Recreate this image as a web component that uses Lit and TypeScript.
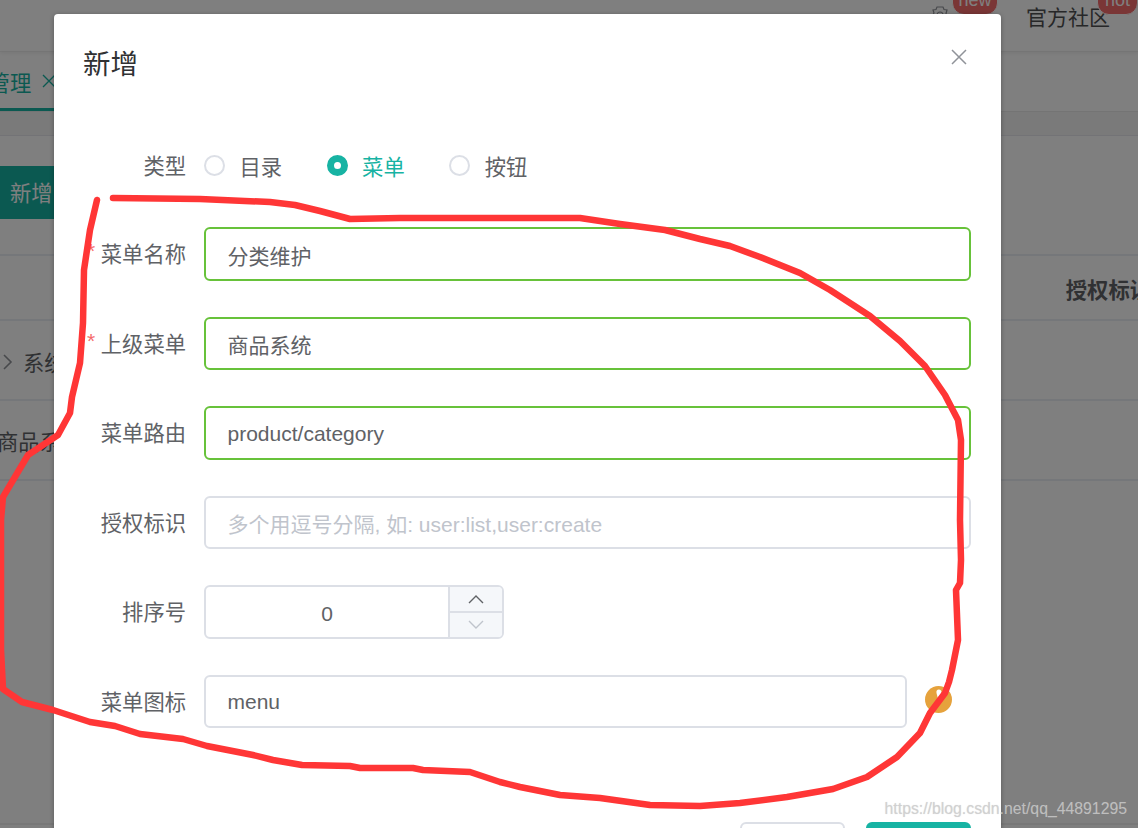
import { LitElement, html, css } from "lit";
import { customElement } from "lit/decorators.js";

const STROKE = "M113 198 L200 199 L270 202 L295 205 L320 211 L350 219 L400 218 L580 218 L620 224 L665 230 L700 239 L730 246 L760 257 L800 273 L830 290 L870 316 L900 341 L925 366 L945 395 L958 420 L961 440 L960 520 L961 560 L960 583 L956 590 L958 640 L952 670 L949 682 L945 693 L930 713 L920 733 L897 757 L867 777 L833 789 L787 797 L740 803 L700 806 L650 805 L600 798 L560 795 L520 787 L500 782 L470 772 L423 770 L413 768 L360 768 L350 766 L302 765 L273 760 L253 755 L207 746 L183 739 L140 734 L115 726 L90 722 L53 710 L22 702 L3 689 L1 650 L1 520 L3 497 L28 455 L58 435 L70 413 L72 397 L80 363 L83 323 L84 270 L90 230 L97 200";

@customElement("app-root")
export class AppRoot extends LitElement {
  static styles = css`
    :host {
      display: block;
      position: relative;
      width: 1138px;
      height: 828px;
      overflow: hidden;
      background: #fff;
      font-family: "Liberation Sans", "Noto Sans CJK SC", sans-serif;
      font-size: 21.3px;
      color: #606266;
    }
    .page { display: flex; flex-direction: column; height: 828px; }
    .top {
      height: 52px; flex: none; display: flex; justify-content: flex-end; align-items: center;
      border-bottom: 1px solid #f0f0f0; box-sizing: border-box; box-shadow: 0 1px 4px rgba(0,0,0,.08);
    }
    .gear { width: 20px; height: 20px; margin-right: 76px; margin-top: -22px; color: #909399; }
    .community { margin-right: 28px; margin-top: -16px; white-space: nowrap; line-height: 52px; font-size: 21px; color: #303133; opacity: .85; }
    .badge {
      position: absolute; top: -14px; box-sizing: border-box; background: #f56c6c; color: #fff; font-size: 18px; line-height: 26px;
      height: 29px; border: 1px solid #fff; border-radius: 12px; text-align: center;
    }
    .b-new { left: 952px; width: 46px; }
    .b-hot { left: 1097px; width: 41px; }
    .tabs { height: 60px; flex: none; display: flex; box-sizing: border-box; border-bottom: 1px solid #e8e8e8; box-shadow: 0 1px 4px rgba(0,0,0,.1); }
    .tab {
      margin-left: -54px; padding-right: 30px; display: flex; gap: 11px; align-items: center;
      height: 59px; box-sizing: border-box; border-bottom: 3px solid #17b3a3; color: #17b3a3; white-space: nowrap; padding-top: 2px;
    }
    .tab svg { width: 14px; height: 14px; }
    .gutter { height: 24px; flex: none; background: #f4f5f5; border-bottom: 1px solid #e6e6ec; box-sizing: border-box; }
    .content { flex: 1; display: flex; flex-direction: column; min-height: 0; }
    .bar { height: 120px; flex: none; box-sizing: border-box; padding-top: 30px; border-bottom: 2px solid #ebeef5; }
    .add {
      width: 100px; height: 53px; background: #17b3a3; color: #fff; display: flex; align-items: center;
      padding: 0 0 2px 10px; box-sizing: border-box; border-radius: 0 4px 4px 0;
    }
    .row { flex: none; display: flex; align-items: center; box-sizing: border-box; border-bottom: 2px solid #ebeef5; white-space: nowrap; }
    .r-head { height: 65px; justify-content: flex-end; font-weight: 700; color: #606266; padding-top: 2px; }
    .r-head span { margin-right: -13px; }
    .r-sys { height: 80px; gap: 9px; padding-top: 3px; }
    .r-sub { height: 80px; text-indent: -3px; }
    .chev { width: 14px; height: 18px; color: #909399; flex: none; }
    .rest { flex: 1; border-bottom: 2px solid #f0f0f0; margin-bottom: 3px; }

    .mask { position: absolute; inset: 0; background: rgba(0, 0, 0, .5); }
    .dialog {
      position: absolute; left: 54px; top: 14px; width: 947px; height: 900px; box-sizing: border-box;
      background: #fff; border-radius: 4px; box-shadow: 0 1px 5px rgba(0,0,0,.3);
      padding: 0 30px 0 29px; display: flex; flex-direction: column;
    }
    .head { height: 100px; flex: none; display: flex; justify-content: space-between; align-items: flex-start; }
    .title { font-size: 27.5px; line-height: 36px; margin-top: 33px; color: #303133; }
    .close { width: 16px; height: 16px; margin-top: 35px; margin-right: 4px; color: #909399; }
    .form { display: flex; flex-direction: column; }
    .field { display: flex; align-items: center; height: 53.5px; margin-bottom: 36px; flex: none; }
    .radio-field { height: 38px; margin-top: 32px; margin-bottom: 43px; }
    .label { width: 103px; flex: none; text-align: right; white-space: nowrap; position: relative; margin-right: 18px; margin-top: -2px; }
    .star { position: absolute; left: 4px; top: 2px; color: #f56c6c; font-size: 21px; }
    .radios { display: flex; gap: 44.5px; }
    .radio { display: flex; align-items: center; gap: 14.5px; white-space: nowrap; }
    .dot { width: 21px; height: 21px; box-sizing: border-box; border: 2px solid #dcdfe6; border-radius: 50%; background: #fff; flex: none; }
    .radio.on { color: #17b3a3; }
    .radio.on .dot { border: 7px solid #17b3a3; }
    .input {
      flex: 1; height: 53.5px; box-sizing: border-box; border: 2px solid #dcdfe6; border-radius: 6px;
      padding: 2px 21.5px 0; display: flex; align-items: center; white-space: nowrap; min-width: 0; font-size: 21px;
    }
    .input.ok { border-color: #67c23a; }
    .input.ph { color: #c0c4cc; }
    .number {
      width: 300px; flex: none; height: 53.5px; box-sizing: border-box; border: 2px solid #dcdfe6;
      border-radius: 6px; display: flex; overflow: hidden;
    }
    .num-val { flex: 1; display: flex; align-items: center; justify-content: center; padding-top: 4px; font-size: 21px; }
    .steps { width: 52px; flex: none; display: flex; flex-direction: column; background: #f5f7fa; border-left: 2px solid #dcdfe6; }
    .step { flex: 1; display: flex; align-items: center; justify-content: center; color: #606266; }
    .step + .step { border-top: 2px solid #dcdfe6; color: #c0c4cc; }
    .step svg { width: 16px; height: 10px; }
    .icon-wrap { display: flex; flex: 1; align-items: center; min-width: 0; }
    .icon-wrap .input { flex: none; width: 703px; }
    .help { width: 27px; height: 27px; margin-left: 18px; flex: none; margin-top: -3px; }
    .foot { display: flex; justify-content: flex-end; gap: 21px; margin-top: 58px; flex: none; }
    .btn { width: 105px; height: 53px; box-sizing: border-box; border-radius: 6px; display: flex; align-items: center; justify-content: center; border: 2px solid #dcdfe6; }
    .btn.primary { background: #17b3a3; border-color: #17b3a3; color: #fff; }

    .scrawl { position: absolute; inset: 0; width: 1138px; height: 828px; pointer-events: none; }
    .watermark {
      position: absolute; right: 11px; bottom: 10px; font-size: 15.8px; line-height: 18px; white-space: nowrap;
      color: rgba(205, 205, 205, .8); text-shadow: 0 0 1px rgba(160,160,160,.4);
    }
  `;

  private field(label: string, required: boolean, body: unknown) {
    return html`<div class="field">
      <div class="label">${required ? html`<span class="star">*</span>` : ""}${label}</div>
      ${body}
    </div>`;
  }

  render() {
    return html`
      <div class="page">
        <div class="top">
          <svg class="gear" viewBox="0 0 20 20" fill="none" stroke="currentColor" stroke-width="1.2"><path d="M7 2h6l1 2.500 3 .5-1 3.500 1.500 2.500-2.500 3v3H5v-3L2.500 10.500 4 8 3 5l3-.5z"/><circle cx="10" cy="10" r="3"/></svg>
          <span class="community">官方社区</span>
        </div>
        <div class="tabs"><div class="tab">菜单管理<svg viewBox="0 0 14 14" fill="none" stroke="currentColor" stroke-width="1.4"><path d="M1 1l12 12M13 1L1 13"/></svg></div></div>
        <div class="gutter"></div>
        <div class="content">
          <div class="bar"><div class="add">新增</div></div>
          <div class="row r-head"><span>授权标识</span></div>
          <div class="row r-sys">
            <svg class="chev" viewBox="0 0 14 18" fill="none" stroke="currentColor" stroke-width="1.6"><path d="M4 2l7 7-7 7"/></svg>
            <span>系统管理</span>
          </div>
          <div class="row r-sub">商品系统</div>
          <div class="rest"></div>
        </div>
      </div>
      <span class="badge b-new">new</span>
      <span class="badge b-hot">hot</span>
      <div class="mask"></div>
      <div class="dialog">
        <div class="head">
          <div class="title">新增</div>
          <svg class="close" viewBox="0 0 16 16" fill="none" stroke="currentColor" stroke-width="1.5"><path d="M1 1l14 14M15 1L1 15"/></svg>
        </div>
        <div class="form">
          <div class="field radio-field">
            <div class="label">类型</div>
            <div class="radios">
              <div class="radio"><span class="dot"></span>目录</div>
              <div class="radio on"><span class="dot"></span>菜单</div>
              <div class="radio"><span class="dot"></span>按钮</div>
            </div>
          </div>
          ${this.field("菜单名称", true, html`<div class="input ok">分类维护</div>`)}
          ${this.field("上级菜单", true, html`<div class="input ok">商品系统</div>`)}
          ${this.field("菜单路由", false, html`<div class="input ok">product/category</div>`)}
          ${this.field("授权标识", false, html`<div class="input ph">多个用逗号分隔, 如: user:list,user:create</div>`)}
          ${this.field("排序号", false, html`<div class="number">
            <div class="num-val">0</div>
            <div class="steps">
              <div class="step"><svg viewBox="0 0 16 10" fill="none" stroke="currentColor" stroke-width="1.4"><path d="M1 9l7-7 7 7"/></svg></div>
              <div class="step"><svg viewBox="0 0 16 10" fill="none" stroke="currentColor" stroke-width="1.4"><path d="M1 1l7 7 7-7"/></svg></div>
            </div>
          </div>`)}
          ${this.field("菜单图标", false, html`<div class="icon-wrap">
            <div class="input">menu</div>
            <svg class="help" viewBox="0 0 27 27"><circle cx="13.500" cy="13.500" r="13.500" fill="#e6a23c"/><path d="M13.800 3.500c2 0 3 1.500 2.600 3.500l-1.200 5h-2.400l-1.300-5c-.4-2 .5-3.500 2.300-3.500z" fill="#fff"/></svg>
          </div>`)}
        </div>
        <div class="foot">
          <div class="btn">取消</div>
          <div class="btn primary">确定</div>
        </div>
      </div>
      <svg class="scrawl" viewBox="0 0 1138 828" fill="none"><path d="${STROKE}" stroke="#ff3636" stroke-width="6.500" stroke-linecap="round" stroke-linejoin="round"/></svg>
      <div class="watermark">https://blog.csdn.net/qq_44891295</div>
    `;
  }
}
